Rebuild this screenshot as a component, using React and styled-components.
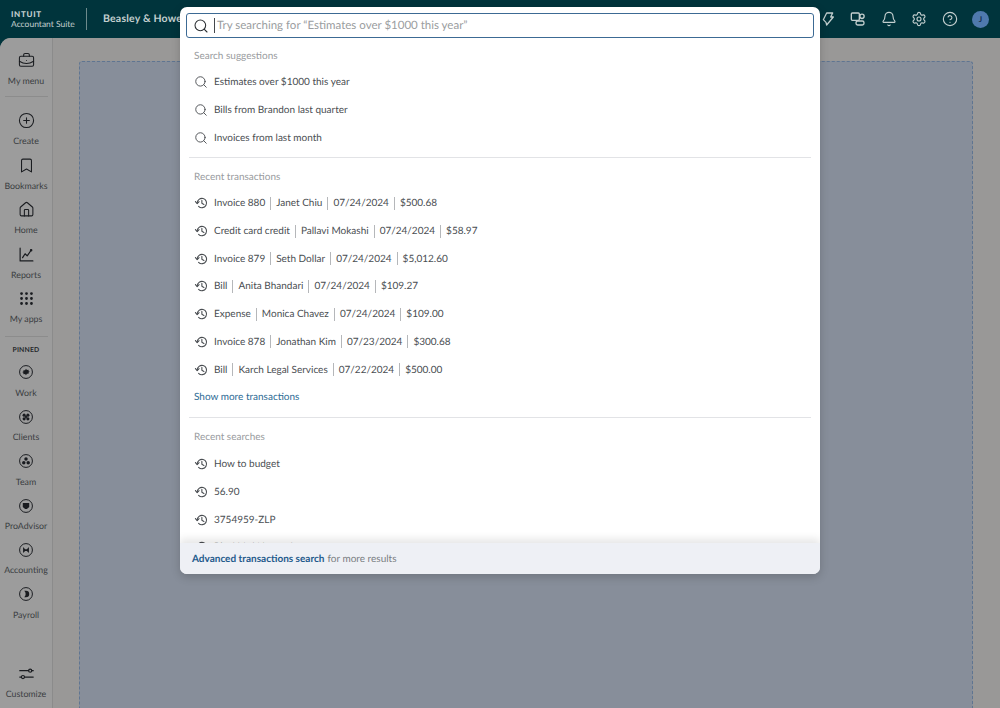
import React from 'react';
import styled, { createGlobalStyle } from 'styled-components';
import {
  Bell, Bookmark, BriefcaseBusiness, CircleHelp, CirclePlus, Grip, House, Search, Settings,
} from 'lucide-react';

const GlobalStyle = createGlobalStyle`
  html, body { margin: 0; padding: 0; height: 708px; overflow: hidden; }
  body { font-family: "Lato", "Open Sans", sans-serif; text-rendering: geometricPrecision; }
`;

const Page = styled.div`
  position: relative;
  display: flex;
  flex-direction: column;
  width: 1000px;
  height: 708px;
  overflow: hidden;
  background: #00343c;
`;

const TopBar = styled.header`
  display: flex;
  align-items: center;
  height: 38px;
  flex: none;
  padding-left: 11px;
  color: #c3cfcf;
`;

const Logo = styled.div`
  display: flex;
  flex-direction: column;
  width: 75px;
  font-size: 8.5px;
  line-height: 10px;
`;

const LogoMark = styled.span`
  font-weight: 900;
  font-size: 8px;
  letter-spacing: 0.7px;
`;

const BarDivider = styled.div`
  width: 1px;
  height: 22px;
  background: #6d8a8c;
  margin-right: 16px;
`;

const Company = styled.div`
  font-size: 10.5px;
  font-weight: 700;
  letter-spacing: 0.2px;
  white-space: nowrap;
`;

const BarIcons = styled.div`
  display: flex;
  align-items: center;
  gap: 14.5px;
  margin-left: auto;
  margin-right: 11px;
  color: #c3cfcf;
`;

const Avatar = styled.div`
  display: flex;
  align-items: center;
  justify-content: center;
  width: 17px;
  height: 17px;
  border-radius: 50%;
  background: #4f79ad;
  color: #17304f;
  font-size: 8px;
  font-weight: 700;
`;

const Body = styled.div`
  display: flex;
  flex: 1;
  min-height: 0;
  border-top-left-radius: 11px;
  background: #999897;
  overflow: hidden;
`;

const Sidebar = styled.nav`
  display: flex;
  flex-direction: column;
  align-items: center;
  flex: none;
  width: 52px;
  border-right: 1px solid #8b8b8b;
  background: #9c9c9c;
  color: #1a1c20;
`;

const NavGroup = styled.div`
  display: flex;
  flex-direction: column;
  align-items: center;
  padding-top: ${(p) => p.$top}px;
`;

const NavItem = styled.div`
  display: flex;
  flex-direction: column;
  align-items: center;
  height: 44.4px;
  width: 52px;
`;

const NavLabel = styled.span`
  margin-top: 6px;
  font-size: 8.8px;
  line-height: 12px;
  color: #3a3d41;
  white-space: nowrap;
`;

const NavDivider = styled.div`
  width: 43px;
  height: 1px;
  background: #8c8c8c;
  margin-top: ${(p) => p.$top}px;
`;

const Pinned = styled.div`
  font-size: 6.8px;
  line-height: 10px;
  font-weight: 700;
  letter-spacing: 0.2px;
  color: #26292c;
  margin: 8px 0 8.5px;
`;

const Customize = styled(NavItem)`
  margin-top: auto;
  height: 43.5px;
`;

const Main = styled.main`
  flex: 1;
  padding: 23px 27px 0 26px;
  min-width: 0;
`;

const DropZone = styled.div`
  height: 100%;
  box-sizing: border-box;
  border: 1px dashed #5f7591;
  border-bottom: none;
  border-radius: 3px 3px 0 0;
  background: #878e9a;
`;

const Modal = styled.section`
  position: absolute;
  top: 7px;
  left: 180px;
  width: 640px;
  height: 567px;
  display: flex;
  flex-direction: column;
  background: #fff;
  border-radius: 7px;
  overflow: hidden;
  box-shadow: 0 3px 10px rgba(0, 0, 0, 0.18);
`;

const SearchBox = styled.div`
  display: flex;
  align-items: center;
  flex: none;
  box-sizing: border-box;
  height: 25px;
  margin: 6px 6px 0;
  padding-left: 6px;
  border: 1px solid #3c6a94;
  border-radius: 3px;
  color: #2c3034;
`;

const Caret = styled.span`
  width: 1px;
  height: 15px;
  background: #44484c;
  margin-left: 5px;
  margin-right: 2px;
`;

const Placeholder = styled.span`
  font-size: 11.5px;
  color: #9a9da0;
  white-space: nowrap;
`;

const Results = styled.div`
  flex: 1;
  min-height: 0;
  overflow: hidden;
`;

const SectionTitle = styled.div`
  font-size: 10px;
  line-height: 14px;
  color: #999b9e;
  padding-left: 14px;
  margin-top: ${(p) => p.$top}px;
  margin-bottom: 6px;
`;

const Row = styled.div`
  display: flex;
  align-items: center;
  height: 27.7px;
  padding-left: 14px;
  color: #4a4e52;
  font-size: 10px;
  white-space: nowrap;
`;

const RowIcon = styled.span`
  display: flex;
  width: 20px;
  flex: none;
  color: #4a4e52;
`;

const Sep = styled.span`
  width: 1px;
  height: 13px;
  background: #b5b7ba;
  margin: 0 5px;
`;

const ShowMore = styled.div`
  display: flex;
  align-items: center;
  height: 28px;
  padding-left: 14px;
  font-size: 10px;
  color: #2c6a94;
`;

const SectionRule = styled.div`
  height: 1px;
  margin: ${(p) => p.$top}px 9px 0;
  background: #e2e3e6;
`;

const Footer = styled.footer`
  flex: none;
  display: flex;
  align-items: center;
  height: 31px;
  padding-left: 12px;
  background: #eef0f5;
  box-shadow: 0 -4px 8px rgba(0, 0, 0, 0.1);
  font-size: 10px;
  color: #7a7e82;
  z-index: 1;
`;

const FooterLink = styled.span`
  font-weight: 700;
  color: #1f5a8c;
  margin-right: 3px;
`;

const HistoryIcon = () => (
  <svg width="14" height="14" viewBox="0 0 24 24" fill="none" stroke="currentColor" strokeWidth="1.9" strokeLinecap="round" strokeLinejoin="round">
    <path d="M5.5 12a8 8 0 1 1 2.4 5.8" />
    <path d="M2.5 9.5 5.500 13l3.2-3.3" />
    <path d="M13.5 7.5V12.5l3.5 2" />
  </svg>
);

const BoltIcon = () => (
  <svg width="16" height="16" viewBox="0 0 24 24" fill="none" stroke="currentColor" strokeWidth="1.9" strokeLinejoin="round" strokeLinecap="round">
    <path d="M9 17 5 13 10 3h9l-3 6h4L10 21z" />
  </svg>
);

const TeamsIcon = () => (
  <svg width="16" height="16" viewBox="0 0 24 24" fill="none" stroke="currentColor" strokeWidth="2" strokeLinejoin="round">
    <rect x="2" y="3" width="12" height="11" rx="1.5" />
    <circle cx="18" cy="8" r="3.2" />
    <rect x="9" y="15" width="12" height="6" rx="2.5" />
  </svg>
);

const ReportsIcon = () => (
  <svg width="17" height="17" viewBox="0 0 24 24" fill="none" stroke="currentColor" strokeWidth="1.7" strokeLinecap="round" strokeLinejoin="round">
    <path d="M3 3v18h18" />
    <path d="M6.5 16.500 10 11l3 3 5.500-8" />
    <circle cx="18.500" cy="6" r="1" fill="currentColor" />
  </svg>
);

const SlidersIcon = () => (
  <svg width="17" height="17" viewBox="0 0 24 24" fill="none" stroke="currentColor" strokeWidth="1.7" strokeLinecap="round">
    <path d="M2.500 8h12.500M19.500 8h2" />
    <circle cx="17.200" cy="8" r="2.200" />
    <path d="M2.500 17h2M9.500 17h12" />
    <circle cx="7" cy="17" r="2.200" />
  </svg>
);

const PinGlyph = styled.svg`
  flex: none;
  margin: 1.5px 0;
`;

const PinIcon = ({ children }) => (
  <PinGlyph width="14" height="14" viewBox="0 0 24 24" fill="#1a1c20" stroke="none">
    <circle cx="12" cy="12" r="11" fill="none" stroke="#1a1c20" strokeWidth="1.7" />
    {children}
  </PinGlyph>
);

const topNav = [
  { label: 'Create', icon: <CirclePlus size={17} strokeWidth={1.5} /> },
  { label: 'Bookmarks', icon: <Bookmark size={17} strokeWidth={1.5} /> },
  { label: 'Home', icon: <House size={17} strokeWidth={1.5} /> },
  { label: 'Reports', icon: <ReportsIcon /> },
  { label: 'My apps', icon: <Grip size={17} strokeWidth={2} /> },
];

const pinnedNav = [
  { label: 'Work', shape: <path d="M12 6.5l1.6 2.200 2.700-.4.4 2.700 2.200.5-2.200 1-.4 2.700-2.700-.4L12 17.500l-1.600-2.200-2.700.4-.4-2.700-2.200-1 2.200-.5.4-2.700 2.700.4z" /> },
  { label: 'Clients', shape: <><circle cx="8.800" cy="8.800" r="2.700" /><circle cx="15.200" cy="8.800" r="2.700" /><circle cx="8.800" cy="15.200" r="2.700" /><circle cx="15.200" cy="15.200" r="2.700" /><circle cx="12" cy="12" r="2" /></> },
  { label: 'Team', shape: <><circle cx="12" cy="8.500" r="3" /><circle cx="8.200" cy="14.800" r="3" /><circle cx="15.800" cy="14.800" r="3" /></> },
  { label: 'ProAdvisor', shape: <path d="M6.500 7h11v6.500L13.500 17h-3l-4-3.500z" /> },
  { label: 'Accounting', shape: <path d="M7 7l3.500 3.500h3L17 7v10l-3.500-3.500h-3L7 17z" /> },
  { label: 'Payroll', shape: <path d="M9 6.500h3a5.500 5.500 0 0 1 0 11H9a7.500 7.500 0 0 0 0-11z" /> },
];

const transactions = [
  ['Invoice 880', 'Janet Chiu', '07/24/2024', '$500.68'],
  ['Credit card credit', 'Pallavi Mokashi', '07/24/2024', '$58.97'],
  ['Invoice 879', 'Seth Dollar', '07/24/2024', '$5,012.60'],
  ['Bill', 'Anita Bhandari', '07/24/2024', '$109.27'],
  ['Expense', 'Monica Chavez', '07/24/2024', '$109.00'],
  ['Invoice 878', 'Jonathan Kim', '07/23/2024', '$300.68'],
  ['Bill', 'Karch Legal Services', '07/22/2024', '$500.00'],
];

const suggestions = ['Estimates over $1000 this year', 'Bills from Brandon last quarter', 'Invoices from last month'];
const searches = ['How to budget', '56.90', '3754959-ZLP', 'Blackbird Networks'];

const App = () => (
  <Page>
    <GlobalStyle />
    <TopBar>
      <Logo>
        <LogoMark>INTUIT</LogoMark>
        <span>Accountant Suite</span>
      </Logo>
      <BarDivider />
      <Company>Beasley &amp; Howe LLC</Company>
      <BarIcons>
        <BoltIcon />
        <TeamsIcon />
        <Bell size={16} strokeWidth={1.7} />
        <Settings size={16} strokeWidth={1.7} />
        <CircleHelp size={16} strokeWidth={1.7} />
        <Avatar>J</Avatar>
      </BarIcons>
    </TopBar>
    <Body>
      <Sidebar>
        <NavGroup $top={13.5}>
          <NavItem>
            <BriefcaseBusiness size={17} strokeWidth={1.5} />
            <NavLabel>My menu</NavLabel>
          </NavItem>
        </NavGroup>
        <NavDivider $top={0} />
        <NavGroup $top={15.5}>
          {topNav.map((item) => (
            <NavItem key={item.label}>
              {item.icon}
              <NavLabel>{item.label}</NavLabel>
            </NavItem>
          ))}
        </NavGroup>
        <NavDivider $top={2} />
        <Pinned>PINNED</Pinned>
        {pinnedNav.map((item) => (
          <NavItem key={item.label}>
            <PinIcon>{item.shape}</PinIcon>
            <NavLabel>{item.label}</NavLabel>
          </NavItem>
        ))}
        <Customize>
          <SlidersIcon />
          <NavLabel>Customize</NavLabel>
        </Customize>
      </Sidebar>
      <Main>
        <DropZone />
      </Main>
    </Body>
    <Modal>
      <SearchBox>
        <Search size={16} strokeWidth={1.6} />
        <Caret />
        <Placeholder>Try searching for “Estimates over $1000 this year”</Placeholder>
      </SearchBox>
      <Results>
        <SectionTitle $top={10.5}>Search suggestions</SectionTitle>
        {suggestions.map((text) => (
          <Row key={text}>
            <RowIcon><Search size={14} strokeWidth={1.6} /></RowIcon>
            {text}
          </Row>
        ))}
        <SectionRule $top={5} />
        <SectionTitle $top={12}>Recent transactions</SectionTitle>
        {transactions.map((cells) => (
          <Row key={cells[0] + cells[1]}>
            <RowIcon><HistoryIcon /></RowIcon>
            {cells.map((cell, i) => (
              <React.Fragment key={cell}>
                {i > 0 && <Sep />}
                {cell}
              </React.Fragment>
            ))}
          </Row>
        ))}
        <ShowMore>Show more transactions</ShowMore>
        <SectionRule $top={6} />
        <SectionTitle $top={12}>Recent searches</SectionTitle>
        {searches.map((text) => (
          <Row key={text}>
            <RowIcon><HistoryIcon /></RowIcon>
            {text}
          </Row>
        ))}
      </Results>
      <Footer>
        <FooterLink>Advanced transactions search</FooterLink>
        for more results
      </Footer>
    </Modal>
  </Page>
);

export default App;
